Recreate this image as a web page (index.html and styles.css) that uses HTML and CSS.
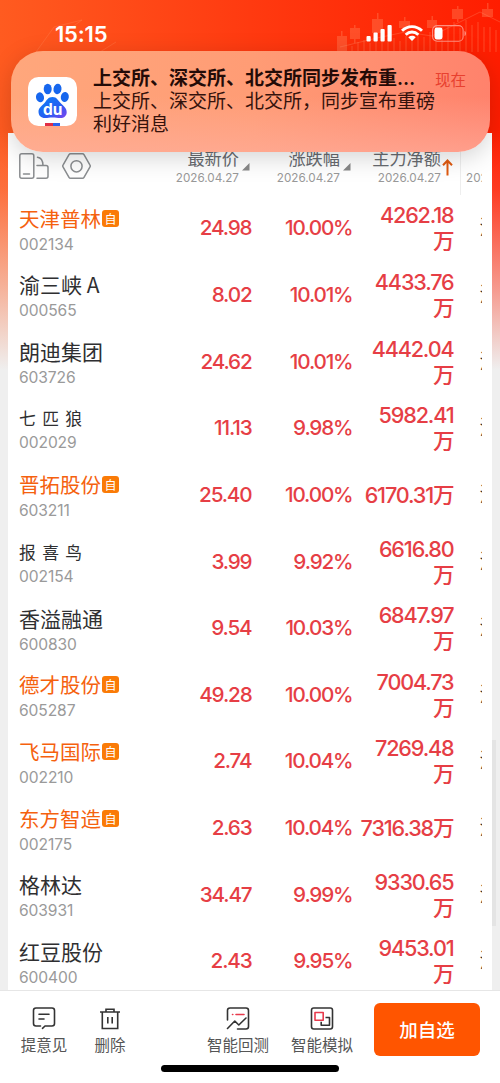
FILE: index.html
```html
<!DOCTYPE html>
<html lang="zh-CN">
<head>
<meta charset="utf-8">
<title>自选股</title>
<link rel="stylesheet" href="styles.css">
</head>
<body>
<div class="screen">
  <svg class="decor" width="500" height="60" viewBox="0 0 500 60">
    <g fill="#ff8a62" opacity=".36">
      <path d="M337 36h10v16h-10zM341 31h1.500v5H341zM350 28h10v11h-10zM354 25h1.500v3H354zM354 39h1.500v4H354zM372 19h11v14h-11zM377 13h1.500v6H377zM399 21h11v7h-11zM404 17h1.500v4H404zM427 20h10v8h-10zM431.500 16h1.500v4h-1.500zM452 9h11v10h-11zM457 6h1.500v3H457zM457 19h1.500v3H457zM482 9h11v8h-11zM487 3h1.500v6H487z"/>
    </g>
    <path d="M340 47L377 38L405 32L432 36L456 24L480 12L500 22" fill="none" stroke="#ff9470" opacity=".3"/>
    <path d="M352 52V46M358 52V42M364 52V40M370 52V43M376 52V39M382 52V41M388 52V38M394 52V38M400 52V41M406 52V36M412 52V38M418 52V33M424 52V37M430 52V32M436 52V29M442 52V27M448 52V25M454 52V22M460 52V28M466 52V20M472 52V25M478 52V22M484 52V27M490 52V27M496 52V30" stroke="#ff7850" stroke-width="2" opacity=".24"/>
    <path d="M36 52L54 27L82 20L68 30M100 52L116 42" fill="none" stroke="#ff8c5a" opacity=".3"/>
  </svg>

  <header class="status">
    <span class="clock">15:15</span>
    <div class="indicators">
      <svg width="26" height="17" viewBox="0 0 26 17" fill="#fff"><rect x=".5" y="11" width="4.200" height="5.500" rx="1"/><rect x="7.500" y="7.500" width="4.200" height="9" rx="1"/><rect x="14.500" y="4" width="4.200" height="12.500" rx="1"/><rect x="21.500" y="0" width="4.200" height="16.500" rx="1"/></svg>
      <svg width="22" height="16" viewBox="0 0 22 16" fill="none" stroke="#fff" stroke-width="2.900"><path d="M1 5.800C6.700.2 15.300.2 21 5.800M4.700 9.700c3.700-3.600 8.900-3.600 12.600 0"/><path d="M7.300 12.200c2.200-1.900 5.200-1.900 7.400 0L11 16z" fill="#fff" stroke="none"/></svg>
      <svg width="35" height="17" viewBox="0 0 35 17"><rect x=".6" y=".6" width="30.500" height="15.600" rx="4.500" fill="none" stroke="#ff8f80" stroke-width="1.100"/><rect x="2.500" y="2.600" width="8" height="11.800" rx="2.300" fill="#fff"/><path d="M32.500 6v5c2-.6 2-4.400 0-5" fill="#ff8f80"/></svg>
    </div>
  </header>

  <main class="panel">
    <div class="thead">
      <div class="tools">
        <svg width="30" height="27" viewBox="0 0 30 27" fill="none" stroke="#8b8e91" stroke-width="1.500" stroke-linecap="round" stroke-linejoin="round"><rect x=".8" y=".8" width="14" height="24.500" rx="2"/><path d="M4.500 21h6M18 12.500h9a2 2 0 0 1 2 2v8.800a2 2 0 0 1-2 2h-9M18.500 4.300c3.500.4 5.300 3 5.500 8"/></svg>
        <svg width="29" height="27" viewBox="0 0 29 27" fill="none" stroke="#8b8e91" stroke-width="1.500" stroke-linejoin="round"><path d="M8.500.8h12q1 0 1.500.9l6 10.500q.5.800 0 1.600l-6 10.600q-.5.900-1.500.9h-12q-1 0-1.500-.9L1 13.800q-.5-.8 0-1.600L7 1.700Q7.500.8 8.500.8z"/><circle cx="14.500" cy="13.300" r="5.600"/></svg>
      </div>
      <div class="th"><b>最新价</b><i>2026.04.27</i><svg class="tri" width="8" height="8" viewBox="0 0 8 8"><path d="M7.500 0v7.500H0z" fill="#888"/></svg></div>
      <div class="th"><b>涨跌幅</b><i>2026.04.27</i><svg class="tri" width="8" height="8" viewBox="0 0 8 8"><path d="M7.500 0v7.500H0z" fill="#888"/></svg></div>
      <div class="th"><b>主力净额</b><i>2026.04.27</i><svg class="up" width="11" height="17" viewBox="0 0 11 17" fill="none" stroke="#e05a10" stroke-width="2"><path d="M5.500 16.500V2M1 6.200L5.500 1.500L10 6.200"/></svg></div>
      <div class="peek head">2026</div>
    </div>
    <div class="row own"><div class="stock"><p>天津普林<em>自</em></p><small>002134</small></div><div class="n">24.98</div><div class="n">10.00%</div><div class="n net">4262.18<br>万</div><div class="peek">消</div></div>
    <div class="row"><div class="stock"><p>渝三峡 A</p><small>000565</small></div><div class="n">8.02</div><div class="n">10.01%</div><div class="n net">4433.76<br>万</div><div class="peek">消</div></div>
    <div class="row"><div class="stock"><p>朗迪集团</p><small>603726</small></div><div class="n">24.62</div><div class="n">10.01%</div><div class="n net">4442.04<br>万</div><div class="peek">消</div></div>
    <div class="row spaced"><div class="stock"><p>七 匹 狼</p><small>002029</small></div><div class="n">11.13</div><div class="n">9.98%</div><div class="n net">5982.41<br>万</div><div class="peek">消</div></div>
    <div class="row own"><div class="stock"><p>晋拓股份<em>自</em></p><small>603211</small></div><div class="n">25.40</div><div class="n">10.00%</div><div class="n net">6170.31万</div><div class="peek">消</div></div>
    <div class="row spaced"><div class="stock"><p>报 喜 鸟</p><small>002154</small></div><div class="n">3.99</div><div class="n">9.92%</div><div class="n net">6616.80<br>万</div><div class="peek">消</div></div>
    <div class="row"><div class="stock"><p>香溢融通</p><small>600830</small></div><div class="n">9.54</div><div class="n">10.03%</div><div class="n net">6847.97<br>万</div><div class="peek">消</div></div>
    <div class="row own"><div class="stock"><p>德才股份<em>自</em></p><small>605287</small></div><div class="n">49.28</div><div class="n">10.00%</div><div class="n net">7004.73<br>万</div><div class="peek">消</div></div>
    <div class="row own"><div class="stock"><p>飞马国际<em>自</em></p><small>002210</small></div><div class="n">2.74</div><div class="n">10.04%</div><div class="n net">7269.48<br>万</div><div class="peek">消</div></div>
    <div class="row own"><div class="stock"><p>东方智造<em>自</em></p><small>002175</small></div><div class="n">2.63</div><div class="n">10.04%</div><div class="n net">7316.38万</div><div class="peek">消</div></div>
    <div class="row"><div class="stock"><p>格林达</p><small>603931</small></div><div class="n">34.47</div><div class="n">9.99%</div><div class="n net">9330.65<br>万</div><div class="peek">消</div></div>
    <div class="row"><div class="stock"><p>红豆股份</p><small>600400</small></div><div class="n">2.43</div><div class="n">9.95%</div><div class="n net">9453.01<br>万</div><div class="peek">消</div></div>
  </main>
  <div class="scroll"></div>

  <footer class="bar">
    <div class="act a1"><svg width="24" height="24" viewBox="0 0 24 24" fill="none" stroke="#333" stroke-width="1.600" stroke-linecap="round" stroke-linejoin="round"><path d="M8.500 20H4a2.500 2.500 0 0 1-2.500-2.500v-13A2.500 2.500 0 0 1 4 2h16a2.500 2.500 0 0 1 2.500 2.500v13A2.500 2.500 0 0 1 20 20h-7l-2.500 2.300M7 8.300h10M7 13h5"/></svg><span>提意见</span></div>
    <div class="act a2"><svg width="24" height="24" viewBox="0 0 24 24" fill="none" stroke="#333" stroke-width="1.600"><path d="M2 6h20M4.300 6v16.500h15.400V6M8 6V3.200h8V6M9.800 11v6.500M14.200 11v6.500"/></svg><span>删除</span></div>
    <div class="act a3"><svg width="24" height="24" viewBox="0 0 24 24" fill="none" stroke="#333" stroke-width="1.600" stroke-linecap="round" stroke-linejoin="round"><path d="M1.500 14V4.500A2.500 2.500 0 0 1 4 2h16a2.500 2.500 0 0 1 2.500 2.500v16A2.500 2.500 0 0 1 20 23h-8.500M1.500 22.500l7.300-7.500 4 4 7.200-7"/><path d="M6.500 8.500h.3M10 8.500h8" stroke="#e83b4d"/></svg><span>智能回测</span></div>
    <div class="act a4"><svg width="24" height="24" viewBox="0 0 24 24" fill="none" stroke="#333" stroke-width="1.600" stroke-linejoin="round"><rect x="1.500" y="2" width="21" height="21" rx="2.200"/><path d="M15.500 11.500h4v7.800h-8.300v-3.500"/><path d="M5 6.500h8.200v7.700H5z" stroke="#e83b4d"/></svg><span>智能模拟</span></div>
    <button class="add">加自选</button>
    <div class="home"></div>
  </footer>

  <aside class="notice">
    <svg class="logo" width="49" height="49" viewBox="0 0 49 49">
      <defs><linearGradient id="paw" x1="0" y1="0" x2="1" y2="1"><stop offset="0" stop-color="#0a83f6"/><stop offset=".6" stop-color="#285cf2"/><stop offset="1" stop-color="#8044ef"/></linearGradient></defs>
      <rect width="49" height="49" rx="10.500" fill="#fff"/>
      <g fill="#1767ee"><ellipse cx="12" cy="20.300" rx="4" ry="5" transform="rotate(-12 12 20.300)"/><ellipse cx="19.700" cy="12" rx="4" ry="5.200"/><ellipse cx="29.500" cy="12" rx="4" ry="5.200" transform="rotate(8 29.500 12)"/><ellipse cx="36.800" cy="20" rx="4" ry="5" transform="rotate(10 36.800 20)"/></g>
      <path d="M24.500 20c4.500 0 5.500 3.500 8.500 6.500s5.700 4.500 5.700 8.700c0 3.500-2.700 5.800-6.200 5.800-3 0-5-.5-8-.5s-4.500.5-7.500.5c-4 0-6.500-2.500-6.500-6.300 0-4 3.500-5.700 6-8.700s3.500-6 8-6z" fill="url(#paw)"/>
      <text x="24.700" y="37.500" class="du">du</text>
      <path d="M17 46h8v3h-8z" fill="#e12e45"/><path d="M25 46h7v3h-7z" fill="#2b62ee"/>
    </svg>
    <div class="msg">
      <div class="title"><strong>上交所、深交所、北交所同步发布重…</strong><time>现在</time></div>
      <p>上交所、深交所、北交所，同步宣布重磅<br>利好消息</p>
    </div>
  </aside>
</div>
</body>
</html>
```

FILE: styles.css
```css
* { box-sizing: border-box; }
body { margin: 0; font-family: Inter, "Noto Sans CJK SC", sans-serif; }
p { margin: 0; }

.screen {
  position: relative;
  width: 500px;
  height: 1083px;
  overflow: hidden;
  display: flex;
  flex-direction: column;
  background:
    linear-gradient(to bottom, rgba(239,239,239,0) 130px, rgba(239,239,239,.14) 190px, rgba(239,239,239,.6) 290px, #efefef 370px),
    linear-gradient(to right, #ff5b20, #ff3a10 50%, #ff1d00);
}
.decor { position: absolute; left: 0; top: 0; }

.status {
  flex: none;
  position: relative;
  height: 133px;
  padding: 21px 33px 0 55px;
  display: flex;
  justify-content: space-between;
  color: #fff;
}
.clock { font-size: 22px; line-height: 26px; font-weight: 600; letter-spacing: -.2px; }
.indicators { display: flex; align-items: flex-start; gap: 9px; padding-top: 4px; }

.panel {
  flex: none;
  height: 857px;
  margin: 0 8px;
  background: #fff;
  overflow: hidden;
}
.thead, .row {
  display: grid;
  grid-template-columns: 141px 92px 101px 101px 28px;
  padding-left: 11px;
  width: 474px;
  overflow: hidden;
}
.thead { height: 62px; }
.row { height: 66.65px; align-items: center; }

.tools { display: flex; gap: 13px; padding-top: 20px; }
.th {
  display: flex;
  flex-direction: column;
  align-items: flex-end;
  padding: 13px 13px 0 0;
  position: relative;
  color: #686b70;
  white-space: nowrap;
}
.th b { font-weight: 400; font-size: 17.2px; line-height: 25px; }
.th i { font-style: normal; font-size: 11.7px; line-height: 15px; color: #999; }
.tri { position: absolute; right: 2px; top: 30px; }
.up { position: absolute; right: 1px; top: 26px; }

.stock { padding-top: 3px; }
.stock p { display: flex; align-items: center; font-family: "Noto Sans CJK SC", sans-serif; font-size: 21px; line-height: 27px; color: #2f2f31; white-space: pre; }
.stock small { display: block; margin-top: 2px; font-size: 15.6px; line-height: 21px; letter-spacing: -.1px; color: #9a9a9a; }
.own p { color: #f5610e; font-size: 20.5px; }
.own em { width: 17px; height: 17px; margin-left: 1px; border-radius: 3px; background: #fa7b07; color: #fff; font-size: 12px; line-height: 17px; text-align: center; font-style: normal; }
.spaced p { font-size: 16.8px; word-spacing: 2.6px; }
.spaced .stock { padding-top: 2px; }
.spaced small { margin-top: 0; }

.n {
  justify-self: end;
  text-align: right;
  color: #e63e45;
  font-size: 20.7px;
  font-weight: 500;
  line-height: 26px;
  letter-spacing: -1.15px;
  padding-right: .5px;
  white-space: nowrap;
}
.net { font-size: 21.6px; }
.peek { justify-self: end; width: 2.6px; overflow: hidden; font-size: 20px; line-height: 26px; color: #333; white-space: nowrap; }
.peek.head { width: 22px; height: 62px; padding: 38px 0 0 5px; border-left: 1px solid #eee; font-size: 11.7px; line-height: 15px; color: #999; }
.scroll { position: absolute; left: 492px; top: 740px; width: 4px; height: 186px; background: #e4e4e4; }

.bar {
  flex: none;
  position: relative;
  height: 93px;
  padding: 12px 20px 0;
  border-top: 1px solid #e6e6e6;
  background: #fff;
  display: flex;
  align-items: flex-start;
}
.act { display: flex; flex-direction: column; align-items: center; gap: 4px; padding-top: 3px; font-size: 15.5px; line-height: 24px; color: #555; white-space: nowrap; }
.a1 { width: 48px; }
.a2 { width: 32px; margin-left: 26px; }
.a3 { width: 64px; margin-left: 80px; }
.a4 { width: 64px; margin-left: 20px; }
.add { margin-left: 20px; width: 106px; height: 53px; border: 0; border-radius: 6px; background: #ff5500; color: #fff; font: 500 18.5px/53px "Noto Sans CJK SC", sans-serif; padding: 0; }
.home { position: absolute; left: 161px; top: 74px; width: 178px; height: 7px; border-radius: 4px; background: #000; }

.notice {
  position: absolute;
  left: 11px;
  top: 51px;
  width: 479px;
  height: 101px;
  border-radius: 32px;
  padding: 16px 17px 0;
  display: flex;
  gap: 16px;
  background: linear-gradient(to bottom, rgba(255,170,155,0) 45%, rgba(255,176,160,.6)), linear-gradient(to right, #ffa77c, #ff9c75 50%, #ff826c);
  box-shadow: 0 6px 24px rgba(0,0,0,.17);
}
.logo { flex: none; margin-top: 10px; }
.du { font: 700 15.5px Inter, sans-serif; fill: #fff; text-anchor: middle; }
.msg { flex: 1; color: #35120c; font-size: 19px; line-height: 23px; white-space: nowrap; }
.title { display: flex; justify-content: space-between; height: 23px; margin-right: 7px; }
.title strong { font-weight: 600; color: #240b07; }
.title time { font-size: 15.5px; line-height: 27px; color: #e8402f; }
```
